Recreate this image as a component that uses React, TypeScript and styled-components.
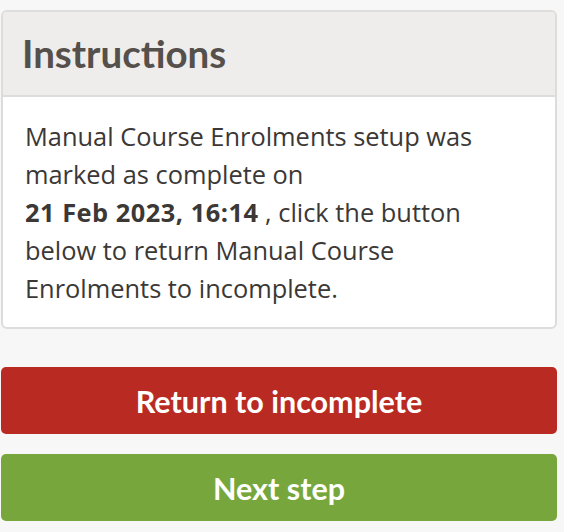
import React from "react";
import styled, { createGlobalStyle } from "styled-components";

const Global = createGlobalStyle`
  html, body { margin: 0; padding: 0; background: #f7f7f7; }
  body { font-family: "Open Sans", "Noto Sans", sans-serif; }
`;

const Page = styled.div`
  width: 564px;
  padding: 10px 7px 0 1px;
  box-sizing: border-box;
  display: flex;
  flex-direction: column;
`;

const Card = styled.section`
  background: #fff;
  border: 2px solid #dddcdb;
  border-radius: 6px;
  overflow: hidden;
`;

const CardHeader = styled.header`
  background: #eeedeb;
  border-bottom: 2px solid #dddcdb;
  height: 85px;
  box-sizing: border-box;
  display: flex;
  align-items: center;
  padding: 0 19px 2px;
`;

const Title = styled.h2`
  margin: 0;
  font-family: Lato, "Open Sans", sans-serif;
  font-size: 38.5px;
  font-weight: 700;
  color: #55504c;
`;

const CardBody = styled.div`
  padding: 20px 30px 20px 22px;
  font-size: 25.4px;
  line-height: 38px;
  color: #3b3836;
`;

const Strong = styled.strong`
  font-weight: 700;
  letter-spacing: 0.5px;
`;

const Button = styled.button<{ $tone: "danger" | "success" }>`
  display: flex;
  align-items: center;
  justify-content: center;
  width: 100%;
  height: 67px;
  border: none;
  border-radius: 5px;
  background: ${(p) => (p.$tone === "danger" ? "#b92b22" : "#77a73c")};
  color: #fff;
  font-family: Lato, "Open Sans", sans-serif;
  font-size: 30.5px;
  font-weight: 700;
  cursor: pointer;
`;

const Actions = styled.div`
  display: flex;
  flex-direction: column;
  gap: 20px;
  margin-top: 38px;
`;

export default function App() {
  return (
    <>
      <Global />
      <Page>
        <Card>
          <CardHeader>
            <Title>Instructions</Title>
          </CardHeader>
          <CardBody>
            Manual Course Enrolments setup was marked as complete on
            <br />
            <Strong>21 Feb 2023, 16:14</Strong> , click the button below to
            return Manual Course Enrolments to incomplete.
          </CardBody>
        </Card>
        <Actions>
          <Button $tone="danger">Return to incomplete</Button>
          <Button $tone="success">Next step</Button>
        </Actions>
      </Page>
    </>
  );
}
